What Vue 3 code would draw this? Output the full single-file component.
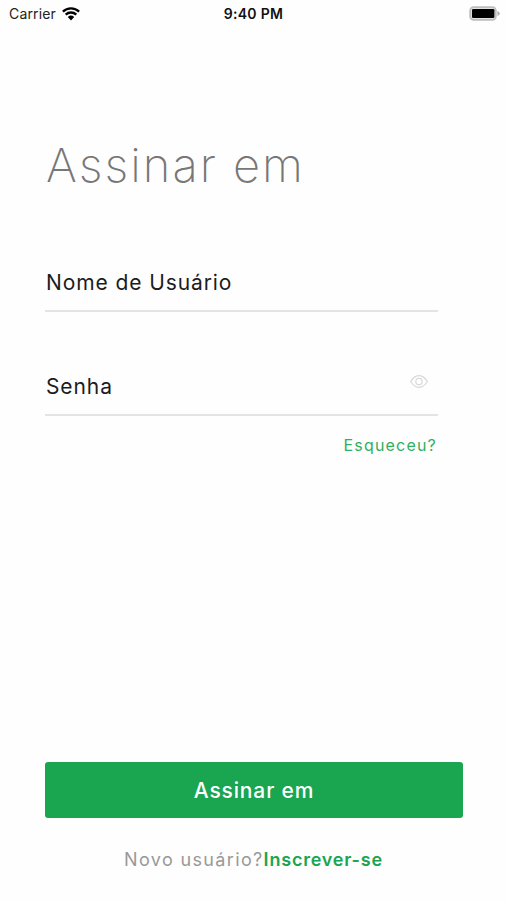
<script setup>
  import { ref } from "vue"

  const username = ref("")
  const password = ref("")
  const showPassword = ref(false)

  function togglePassword() {
    showPassword.value = !showPassword.value
  }
</script>

<template>
  <div class="screen">
    <header class="status_bar">
      <div class="carrier">
        <span>Carrier</span>
        <svg class="wifi" viewBox="0 0 18 14" width="18" height="14">
          <path d="M0.9 4.6a11.7 11.7 0 0 1 16.2 0" />
          <path d="M3.7 7.6a7.7 7.7 0 0 1 10.6 0" />
          <path class="wifi_dot" d="M5.8 10a4.7 4.7 0 0 1 6.4 0L9 13.4z" />
        </svg>
      </div>
      <span class="time">9:40 PM</span>
      <div class="battery_wrap">
        <svg class="battery" viewBox="0 0 32 15" width="32" height="15">
          <rect x="1.2" y="1.2" width="25.6" height="12.6" rx="3.4" fill="#e2e2e2" stroke="#bdbdbd" stroke-width="1.8" />
          <rect x="3" y="3" width="22.4" height="9" rx="1.2" fill="#000" />
          <path d="M28.4 5v5q2.4-0.8 2.4-2.5t-2.4-2.5z" fill="#b0b0b0" />
        </svg>
      </div>
    </header>

    <h1>Assinar em</h1>

    <form @submit.prevent>
      <label class="field">
        <span>Nome de Usuário</span>
        <input v-model="username" type="text" />
      </label>
      <label class="field">
        <span>Senha</span>
        <input v-model="password" :type="showPassword ? 'text' : 'password'" />
        <svg class="eye" viewBox="0 0 18 13" width="18" height="13" @click="togglePassword">
          <path d="M0.6 6.5C3 2.6 5.8 0.6 9 0.6s6 2 8.4 5.9c-2.4 3.9-5.2 5.9-8.4 5.9S3 10.4 0.6 6.5z" />
          <circle cx="9" cy="6.5" r="3.2" />
        </svg>
      </label>
      <a class="forgot">Esqueceu?</a>
      <button type="submit">Assinar em</button>
    </form>

    <p><span class="new_user">Novo usuário?</span><a class="signup">Inscrever-se</a></p>
  </div>
</template>

<style>
  body {
    background-color: #fefefe;
  }
</style>

<style scoped>
  .screen {
    box-sizing: border-box;
    display: flex;
    flex-direction: column;
    height: 900px;
    background-color: #fefefe;
    font-family: Inter, "Open Sans", sans-serif;
    overflow: hidden;
  }

  .status_bar {
    display: grid;
    grid-template-columns: 1fr auto 1fr;
    align-items: center;
    height: 27px;
    padding: 0 6px 0 9px;
    font-size: 14px;
    color: #222;
  }

  .carrier {
    display: flex;
    align-items: center;
    gap: 6px;
    letter-spacing: 0.15px;
  }

  .wifi {
    fill: none;
    stroke: #000;
    stroke-width: 2.3;
  }

  .wifi_dot {
    fill: #000;
    stroke: none;
  }

  .time {
    margin-right: 3px;
    font-weight: 600;
    letter-spacing: 0.3px;
    color: #111;
  }

  .battery_wrap {
    display: flex;
    justify-content: flex-end;
  }

  h1 {
    margin: 108px 0 0 46px;
    font-size: 47px;
    line-height: 60px;
    font-weight: 200;
    letter-spacing: 2px;
    color: #777;
    white-space: nowrap;
  }

  form {
    display: flex;
    flex: 1;
    flex-direction: column;
    padding: 61px 44px 0 45px;
  }

  .field {
    box-sizing: border-box;
    display: flex;
    align-items: center;
    width: 393px;
    height: 56px;
    margin-bottom: 48px;
    border-bottom: 2px solid #e4e4e4;
    font-size: 21px;
    letter-spacing: 0.9px;
    color: #1c1c1c;
    white-space: nowrap;
  }

  .field span {
    margin: 0 0 1px 1px;
  }

  input {
    flex: 1;
    min-width: 0;
    border: none;
    outline: none;
    background: none;
    font: inherit;
  }

  .eye {
    margin: 0 10px 12px 0;
    fill: none;
    stroke: #d5d5d5;
    stroke-width: 1.1;
  }

  .forgot {
    width: 392px;
    margin-top: -31px;
    text-align: right;
    font-size: 16px;
    line-height: 24px;
    letter-spacing: 1.2px;
    color: #31af60;
  }

  button {
    width: 418px;
    height: 56px;
    margin-top: auto;
    border: none;
    border-radius: 3px;
    background-color: #1aa550;
    font: inherit;
    font-size: 21px;
    font-weight: 500;
    letter-spacing: 0.85px;
    color: #fff;
  }

  p {
    height: 24px;
    margin: 30px 0 28px;
    text-align: center;
    font-size: 18px;
    line-height: 24px;
    white-space: nowrap;
  }

  .new_user {
    letter-spacing: 1.35px;
    color: #999;
  }

  .signup {
    font-weight: 600;
    letter-spacing: 0.8px;
    color: #1aa550;
  }
</style>
